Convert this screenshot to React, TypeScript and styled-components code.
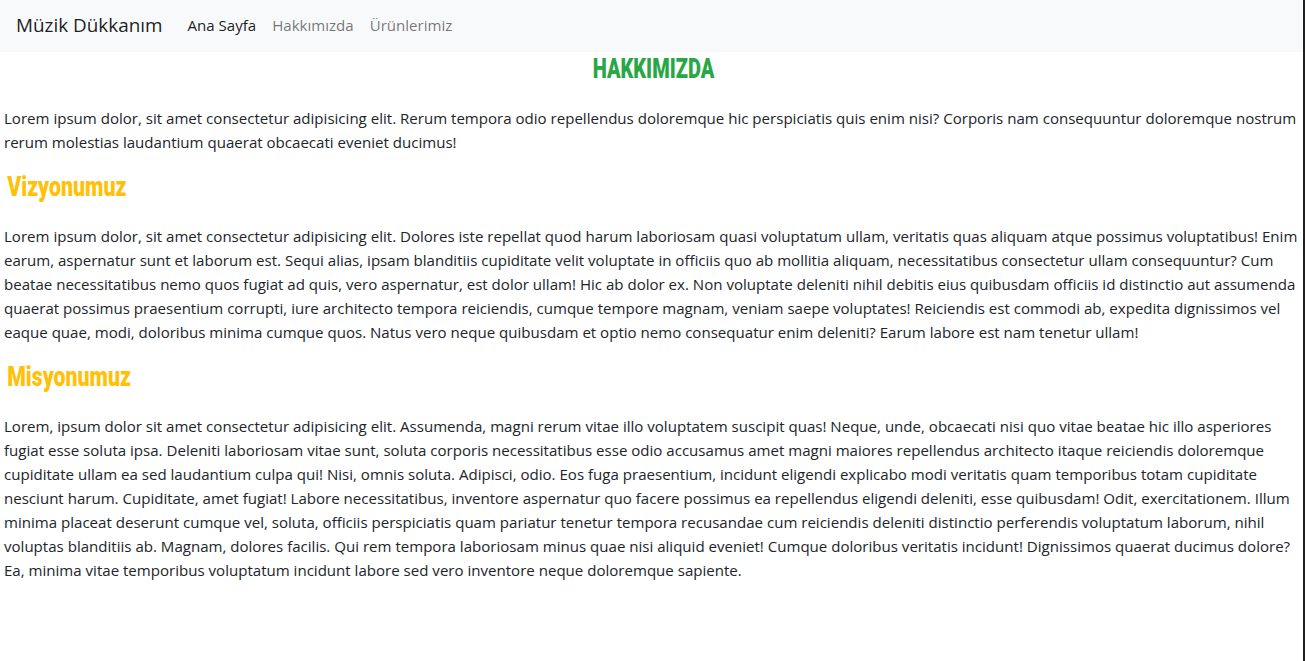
import React from "react";
import styled, { createGlobalStyle } from "styled-components";

const GlobalStyle = createGlobalStyle`
  *, *::before, *::after { box-sizing: border-box; }
  html, body { margin: 0; padding: 0; background: #ffffff; }
  body {
    font-family: "Open Sans", "Noto Sans", sans-serif;
    font-size: 15.07px;
    line-height: 24px;
    color: #212529;
  }
`;

const Page = styled.div`
  min-height: 100vh;
  border-right: 2px solid #202020;
  background: #ffffff;
`;

const Navbar = styled.nav`
  height: 52px;
  background: #f8f9fa;
  display: flex;
  align-items: center;
  padding: 0 16px 2px;
`;

const Brand = styled.a`
  font-size: 18.9px;
  line-height: 30px;
  color: rgba(0, 0, 0, 0.9);
  text-decoration: none;
  margin-right: 17px;
`;

const NavList = styled.ul`
  display: flex;
  list-style: none;
  margin: 0;
  padding: 0;
`;

const NavLink = styled.a<{ $active?: boolean }>`
  display: block;
  padding: 0 8px;
  text-decoration: none;
  color: ${(p) => (p.$active ? "rgba(0, 0, 0, 0.9)" : "rgba(0, 0, 0, 0.55)")};
`;

const Main = styled.main`
  padding: 0 0 0 4px;
`;

const Title = styled.h2`
  margin: 0 0 20px;
  text-align: center;
  font-family: Roboto, "DejaVu Sans", sans-serif;
  font-weight: 900;
  font-size: 27px;
  line-height: 34px;
  color: #28a745;
  transform: scaleX(0.74);
  transform-origin: 50% 50%;
`;

const SectionHeading = styled.h3`
  margin: 0 0 20px;
  padding-left: 4px;
  font-family: Roboto, "DejaVu Sans", sans-serif;
  font-weight: 900;
  font-size: 27px;
  line-height: 34px;
  color: #ffc107;
  transform: scaleX(0.79);
  transform-origin: 0 50%;
`;

const Paragraph = styled.p`
  margin: 0 0 16px;
`;

export default function App() {
  return (
    <>
      <GlobalStyle />
      <Page>
        <Navbar>
          <Brand href="#">Müzik Dükkanım</Brand>
          <NavList>
            <li><NavLink href="#" $active>Ana Sayfa</NavLink></li>
            <li><NavLink href="#">Hakkımızda</NavLink></li>
            <li><NavLink href="#">Ürünlerimiz</NavLink></li>
          </NavList>
        </Navbar>
        <Main>
          <Title>HAKKIMIZDA</Title>
          <Paragraph>
            Lorem ipsum dolor, sit amet consectetur adipisicing elit. Rerum tempora odio repellendus doloremque hic perspiciatis quis enim nisi? Corporis nam consequuntur doloremque nostrum rerum molestias laudantium quaerat obcaecati eveniet ducimus!
          </Paragraph>
          <SectionHeading>Vizyonumuz</SectionHeading>
          <Paragraph>
            Lorem ipsum dolor, sit amet consectetur adipisicing elit. Dolores iste repellat quod harum laboriosam quasi voluptatum ullam, veritatis quas aliquam atque possimus voluptatibus! Enim earum, aspernatur sunt et laborum est. Sequi alias, ipsam blanditiis cupiditate velit voluptate in officiis quo ab mollitia aliquam, necessitatibus consectetur ullam consequuntur? Cum beatae necessitatibus nemo quos fugiat ad quis, vero aspernatur, est dolor ullam! Hic ab dolor ex. Non voluptate deleniti nihil debitis eius quibusdam officiis id distinctio aut assumenda quaerat possimus praesentium corrupti, iure architecto tempora reiciendis, cumque tempore magnam, veniam saepe voluptates! Reiciendis est commodi ab, expedita dignissimos vel eaque quae, modi, doloribus minima cumque quos. Natus vero neque quibusdam et optio nemo consequatur enim deleniti? Earum labore est nam tenetur ullam!
          </Paragraph>
          <SectionHeading>Misyonumuz</SectionHeading>
          <Paragraph>
            Lorem, ipsum dolor sit amet consectetur adipisicing elit. Assumenda, magni rerum vitae illo voluptatem suscipit quas! Neque, unde, obcaecati nisi quo vitae beatae hic illo asperiores fugiat esse soluta ipsa. Deleniti laboriosam vitae sunt, soluta corporis necessitatibus esse odio accusamus amet magni maiores repellendus architecto itaque reiciendis doloremque cupiditate ullam ea sed laudantium culpa qui! Nisi, omnis soluta. Adipisci, odio. Eos fuga praesentium, incidunt eligendi explicabo modi veritatis quam temporibus totam cupiditate nesciunt harum. Cupiditate, amet fugiat! Labore necessitatibus, inventore aspernatur quo facere possimus ea repellendus eligendi deleniti, esse quibusdam! Odit, exercitationem. Illum minima placeat deserunt cumque vel, soluta, officiis perspiciatis quam pariatur tenetur tempora recusandae cum reiciendis deleniti distinctio perferendis voluptatum laborum, nihil voluptas blanditiis ab. Magnam, dolores facilis. Qui rem tempora laboriosam minus quae nisi aliquid eveniet! Cumque doloribus veritatis incidunt! Dignissimos quaerat ducimus dolore? Ea, minima vitae temporibus voluptatum incidunt labore sed vero inventore neque doloremque sapiente.
          </Paragraph>
        </Main>
      </Page>
    </>
  );
}
